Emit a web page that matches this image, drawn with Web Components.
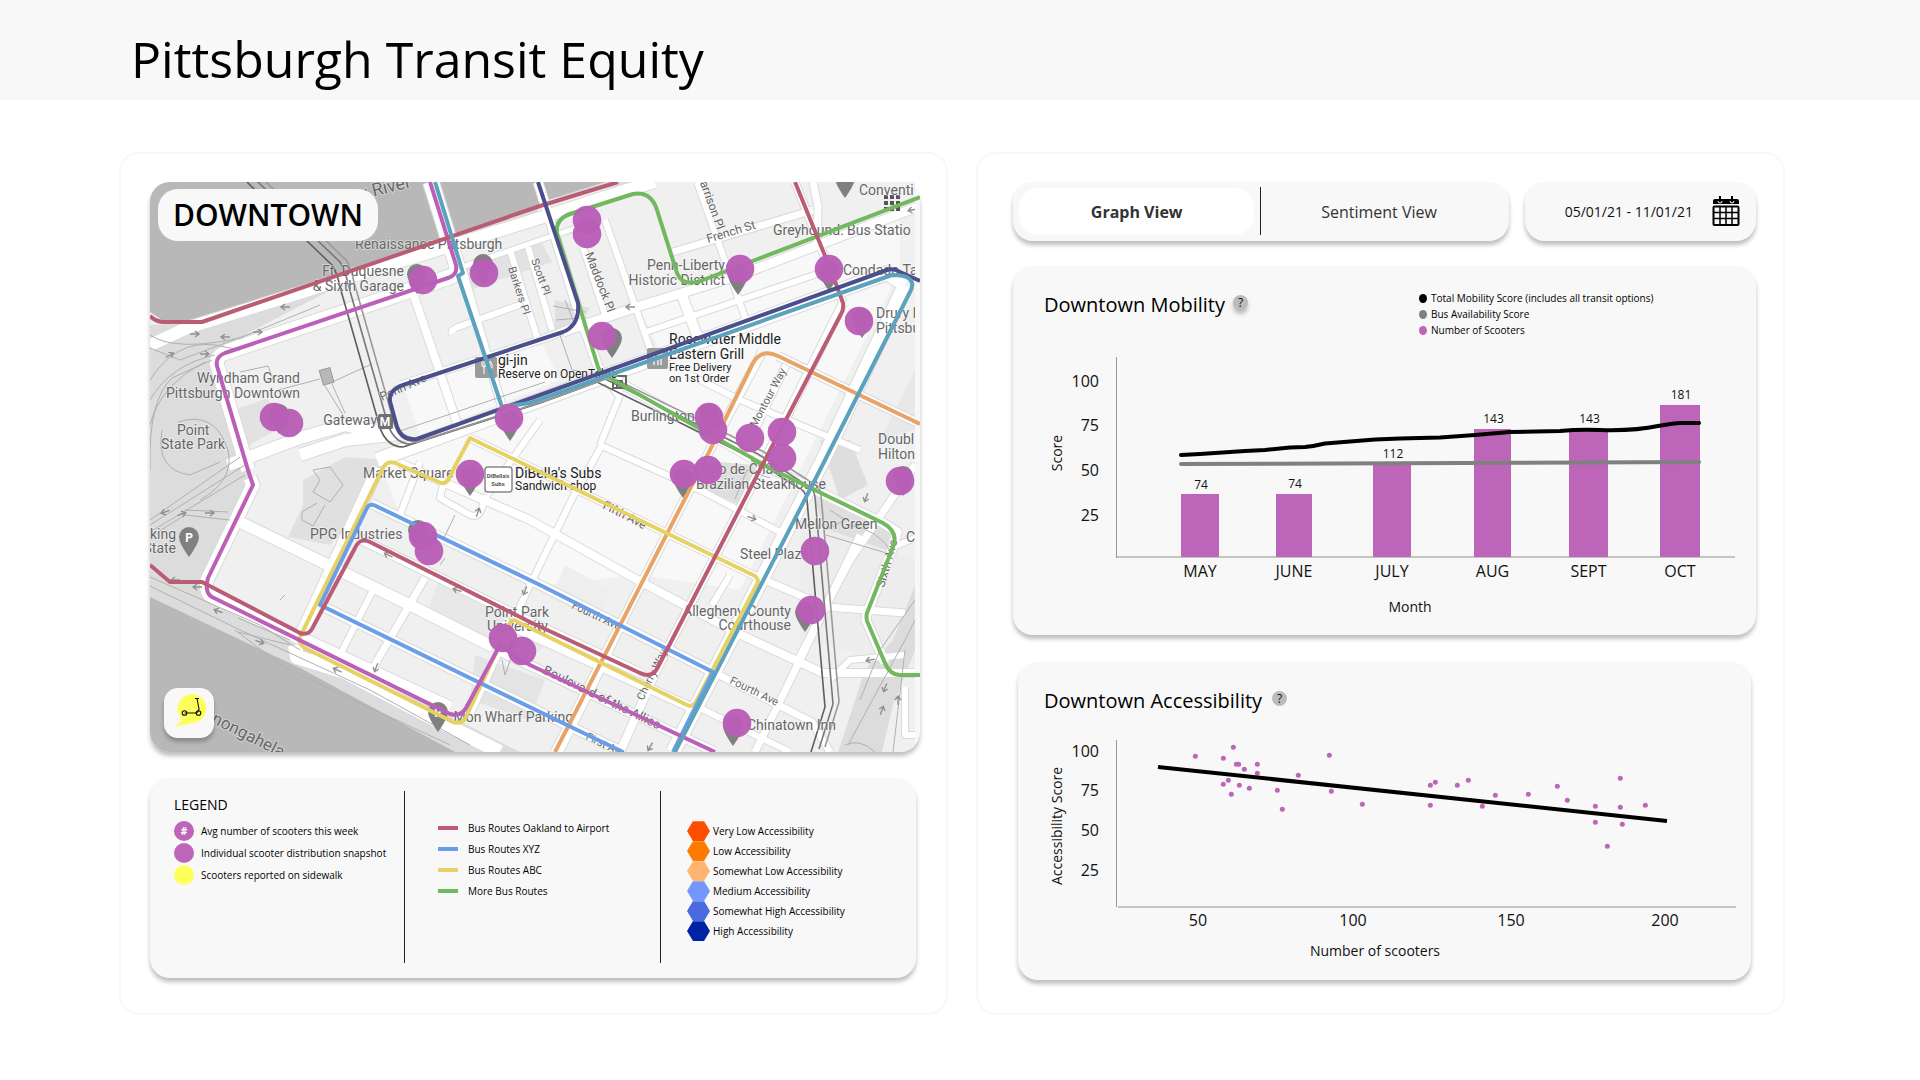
<!DOCTYPE html>
<html lang="en">
<head>
<meta charset="utf-8">
<title>Pittsburgh Transit Equity</title>
<style>
  html, body { margin: 0; background: #fff; }
  body { font-family: "Open Sans", "Noto Sans", sans-serif; color: #000; }
</style>
</head>
<body>
<transit-dashboard></transit-dashboard>

<script>
const define = (name, html) => {
  const template = document.createElement('template');
  template.innerHTML = html;
  customElements.define(name, class extends HTMLElement {
    constructor() {
      super();
      this.attachShadow({ mode: 'open' }).append(template.content.cloneNode(true));
    }
  });
};

/* ---------- page header ---------- */
define('page-header', `
<style>
  :host { display: block; background: #f8f8f8; }
  header { display: flex; align-items: center; height: 100px; padding: 18px 131px 0; box-sizing: border-box; }
  h1 { margin: 0; font-size: 50px; line-height: 64px; font-weight: 400; }
</style>
<header><h1><slot></slot></h1></header>`);

/* ---------- outlined panel ---------- */
define('outline-panel', `
<style>
  :host { display: block; box-sizing: border-box; border: 2px solid #f8f8f8; border-radius: 20px; }
</style>
<slot></slot>`);

/* ---------- help button ---------- */
define('help-button', `
<style>
  :host { display: inline-flex; }
  button { width: 15px; height: 15px; padding: 0; border: 0; border-radius: 50%; background: #bdbbbd; color: #111;
    font: 12px/15px "Open Sans", sans-serif; box-shadow: var(--help-shadow, none); cursor: pointer; }
</style>
<button type="button" aria-label="Help">?</button>`);

/* ---------- map ---------- */
const streets = [
  [12, 'M150 345L187 328L540 218L630 189L655 182'],
  [5, 'M225 347L448 272L540 240L600 220'],
  [14, 'M248 470L218 368Q214 357 225 353L448 278Q458 275 456 265L430 182'],
  [13, 'M250 478L253 485L207 580Q205 592 212 597L450 708'],
  [12, 'M228 465L300 438L345 425L380 432M300 455L345 440L400 434'],
  [8, 'M435 182L463 273L502 407'],
  [8, 'M413 293L457 423'], [6, 'M510 250L537 337'], [6, 'M528 247L552 330'],
  [6, 'M452 334Q450 330 458 327L522 304'],
  [9, 'M538 182L578 310L598 367L620 395'],
  [6, 'M583 247L605 315'], [6, 'M605 220L653 357'],
  [6, 'M697 182L747 323'], [10, 'M680 290L698 338'],
  [7, 'M673 252L813 210'], [7, 'M813 182L818 207L817 250'], [7, 'M795 182L843 303'],
  [9, 'M563 332L640 306L740 275L920 206'],
  [6, 'M643 333L740 300L829 270'],
  [14, 'M377 460L540 400L887 273L905 285'],
  [7, 'M400 385L540 340L580 325'],
  [14, 'M905 285L823 460L673 752'],
  [8, 'M843 303L765 460L658 667L620 752'],
  [8, 'M778 356L920 424M762 352L710 450L555 752'],
  [7, 'M786 365L745 450'],
  [6, 'M690 375L740 400L860 450'],
  [9, 'M603 373L768 467L883 523L897 532L893 547L867 613L866 620L885 663'],
  [12, 'M378 468L300 637'], [7, 'M470 438L753 575L827 607L905 613'],
  [11, 'M240 522L410 605L493 647'],
  [9, 'M372 504L540 585L713 672'],
  [9, 'M320 605L540 712L623 752'],
  [9, 'M360 539L530 622L640 673'],
  [9, 'M503 622L690 707'],
  [9, 'M497 650L715 752'],
  [7, 'M425 578L370 673'], [6, 'M373 590L340 655'],
  [8, 'M400 463L445 483L530 520L643 583L737 633L823 673H920'],
  [6, 'M573 497L530 585L470 715'], [6, 'M420 462L400 515'],
  [6, 'M443 485L440 498L470 515Q478 518 481 510L487 495'],
  [6, 'M640 585L600 672L560 752'], [6, 'M730 575L712 605'],
  [6, 'M540 420L487 495'], [6, 'M602 445L573 497'],
  [6, 'M600 445L700 490L780 532'], [6, 'M620 395L600 445'],
  [7, 'M860 535L800 660L755 752'], [7, 'M915 465L850 560L798 660'],
  [7, 'M713 672L812 722L830 752'], [6, 'M700 708L790 752'],
  [6, 'M905 655L850 660L830 680'], [6, 'M905 687V735H915'], [6, 'M893 547L915 538'],
  [14, 'M295 645L297 657L345 672L440 722L500 752']
];
const blocks = [
  ['#e2e2e2', '455,270 540,240 552,262 470,290'],
  ['#f0f0f0', '228,362 375,312 398,390 340,440 250,470'],
  ['#f0f0f0', '625,205 690,183 800,182 812,206 685,250 668,250'],
  ['#f0f0f0', '250,525 360,575 312,628 215,585'],
  ['#e0e0e0', '303,480 345,457 388,460 365,505 330,545 288,537 303,505'],
  ['#e2e2e2', '228,412 268,398 276,430 240,450'],
  ['#e8e8e8', '440,575 560,635 520,665 425,620'],
  ['#dedede', '700,460 763,466 743,507 693,483'],
  ['#dedede', '813,495 890,533 885,563 827,537'],
  ['#dedede', '820,440 850,440 868,485 840,500'],
  ['#ededed', '800,520 915,560 915,665 800,640'],
  ['#eeeeee', '565,565 610,590 600,620 550,600'],
  ['#e8e8e8', '880,440 915,370 915,430'],
  ['#dcdcdc', '915,585 893,640 865,670 838,752 882,752 893,705 915,650'],
  ['#e4e4e4', '475,655 545,680 530,720 470,700'],
  ['#e0e0e0', '555,300 590,308 580,325 555,330']
];
const rail = 'L307 241L332 265Q337 272 340 287L377 417Q383 447 403 447L540 403L597 382L750 457L797 487Q806 490 807 500L825 707L811 752';
const thinLines = [
  'M150 380Q175 340 215 345L240 350', 'M150 400Q170 365 215 355', 'M150 425Q160 385 205 362', 'M150 335Q175 352 240 338L320 305',
  'M150 470Q148 400 172 378L212 360', 'M178 422Q215 410 228 450Q235 480 200 500', 'M162 430Q155 470 190 475L220 462',
  'M150 525L245 465', 'M150 532L245 475', 'M150 520L240 457', 'M150 537L185 515L230 520', 'M185 510L228 512',
  'M150 577L260 625L300 650', 'M150 586L240 630L370 690L470 745', 'M238 618L290 640', 'M235 630L285 668L450 745', 'M238 632L290 645',
  'M150 348L180 360L260 330', 'M313 470L330 467L343 485L330 502L313 492L320 480L313 470', 'M317 503L302 512V520L313 526L325 505',
  'M455 515L443 540', 'M332 382L372 364', 'M278 390L320 379M240 372L268 366L274 382', 'M325 386L343 415M332 384L345 413',
  'M553 306L585 312M556 320L580 318M560 335L572 370L585 372M565 300L575 325',
  'M502 660L505 675L512 655M440 565L445 558', 'M826 535L893 555Q880 530 850 525M830 510L845 520L825 530',
  'M735 499L747 470L770 478', 'M860 700L880 650L915 600M848 745L905 640L915 620M893 752L905 650',
  'M845 745Q860 738 875 752', 'M400 431L545 382', 'M280 600L285 595'
];
const arrows = [[285,307,180],[195,334,0],[225,337,180],[258,332,0],[170,355,-30],[205,354,0],[165,512,160],[182,514,-20],[210,513,0],
  [175,580,180],[197,587,180],[218,611,200],[260,642,20],[337,670,205],[376,668,110],[525,591,110],[457,590,200],[388,555,205],
  [752,518,20],[866,498,110],[870,660,170],[885,688,110],[882,710,-70],[898,700,-90],[650,747,120],[630,307,180],[478,512,-70],[912,210,170]];
const pins = [[417,274],[483,264],[279,414],[510,421],[612,338],[738,275],[829,271],[862,318],[709,413],[903,476],[805,612],[733,726],[418,530],[470,476],[683,478],[189,537],[438,712],[845,178]];
const scooters = [[423,280],[484,273],[274,417],[289,423],[509,418],[587,220],[587,234],[740,269],[829,269],[859,321],[602,336],
  [709,417],[713,430],[750,438],[782,432],[782,458],[470,474],[423,536],[429,551],[503,638],[522,651],
  [684,474],[708,470],[900,481],[815,551],[811,610],[737,723]];
const routes = [
  ['#e8a468', 'M920 424L778 356Q762 348 753 363L710 450L555 752'],
  ['#e6d264', 'M470 438L453 470Q448 485 441 483L395 463Q387 460 383 468L300 637Q297 643 305 648L453 722Q462 725 466 717L510 623Q512 618 518 622L687 705Q693 708 697 700L758 582Q758 577 753 575Z'],
  ['#6a9ee8', 'M623 752L540 712L320 605L367 508Q370 502 378 507L540 585L713 672L673 752'],
  ['#72b85e', 'M920 197L703 280Q683 288 677 273L657 210Q651 191 633 194L573 213Q555 218 557 233L598 367Q600 373 606 376L768 467L753 460L883 523Q899 532 893 547L867 613Q866 617 867 621L885 663Q890 675 900 675H920'],
  ['#bb5fb8', 'M430 182L456 265Q458 275 448 278L225 353Q215 357 217 366L248 470L253 485L208 578Q204 592 212 597L450 714Q461 717 466 708L500 645L520 660L530 665L715 752'],
  ['#bb5c75', 'M150 316Q156 322 164 322H202L540 206L618 182M795 182L832 273L843 303Q844 309 841 314L765 460L658 667Q652 679 640 673L530 622L370 542Q360 537 355 548L313 627Q309 636 300 633L202 582H170L150 565'],
  ['#4b508c', 'M538 182L578 303Q580 325 563 332L403 385Q386 391 391 405L397 427Q402 441 417 439L540 395L887 270Q893 268 900 272L920 281'],
  ['#5ca2bd', 'M435 182L463 273L458 276L502 407L530 403L892 275Q917 275 911 290L820 470L675 752']
];
/* [text, x, y, options] */
const labels = [
  ['Renaissance Pittsburgh',355,249],['Ft. Duquesne',404,276,{e:1}],['&amp; Sixth Garage',404,291,{e:1}],
  ['y River',412,187,{e:1,r:-14,s:18}],
  ['Barkers Pl',508,268,{r:72,s:11}],['Scott Pl',531,260,{r:70,s:11}],['Maddock Pl',585,254,{r:69,s:12}],['Garrison Pl',697,175,{r:70,s:12}],
  ['French St',708,243,{r:-17,s:12}],['Penn-Liberty',725,270,{e:1}],['Historic District',725,285,{e:1}],
  ['Conventi',859,195],['Greyhound: Bus Statio',773,235],['Condado Ta',843,275],['Drury I',876,318],['Pittsbu',876,333],
  ['gi-jin',498,365,{c:'#222'}],['Reserve on OpenTable',498,378,{c:'#222',s:12}],
  ['Rosewater Middle',669,344,{c:'#222'}],['Eastern Grill',669,359,{c:'#222'}],['Free Delivery',669,371,{c:'#222',s:11}],['on 1st Order',669,382,{c:'#222',s:11}],
  ['Wyndham Grand',300,383,{e:1}],['Pittsburgh Downtown',300,398,{e:1}],['Gateway',377,425,{e:1}],['Penn Ave',382,401,{r:-24,s:12}],
  ['Point',177,435],['State Park',161,449],['Market Square',363,478],
  ["DiBella's Subs",515,478,{c:'#222'}],['Sandwich shop',515,490,{c:'#222',s:12}],
  ['PPG Industries',310,539],['king',176,539,{e:1}],['State',176,553,{e:1}],
  ['Point Park',485,617],['University',487,631],['Boulevard of the Allies',542,673,{r:26,s:13}],
  ['Fifth Ave',602,508,{r:27,s:12}],['Fourth Ave',571,608,{r:25,s:11}],['Fourth Ave',729,683,{r:26,s:11}],['First Ave',585,739,{r:26,s:11}],
  ['Cherry Way',643,701,{r:-64,s:11}],['Montour Way',756,428,{r:-62,s:11}],['Sixth Ave',884,588,{r:-74,s:12}],
  ['Burlington',631,421],['Doubl',878,444],['Hilton',878,459],['Fogo de Chão',695,474],['Brazilian Steakhouse',696,489],
  ['Mellon Green',795,529],['C',906,542],['Steel Plaza',740,559],['Allegheny County',791,616,{e:1}],['Courthouse',791,630,{e:1}],
  ['Chinatown Inn',747,730],['Mon Wharf Parking',573,722,{e:1}],['Monongahela',189,711,{r:27,s:17}]
];
const text = ([t, x, y, o = {}]) => `<text x="${x}" y="${y}" font-size="${o.s || 14}" fill="${o.c || '#666'}"` +
  (o.e ? ' text-anchor="end"' : '') + (o.r ? ` transform="rotate(${o.r} ${x} ${y})"` : '') + `>${t}</text>`;

define('transit-map', `
<style>
  :host { display: block; position: relative; border-radius: 20px; box-shadow: 0 4px 4px rgba(0,0,0,.25); background: #f8f8f8; }
  .map { display: block; width: 100%; height: auto; border-radius: 20px 0 20px 20px; }
  text { font-family: Roboto, sans-serif; }
  h2 { position: absolute; left: 8px; top: 7px; margin: 0; padding: 6px 15px; border-radius: 20px; background: #f8f8f8;
    font-size: 30px; line-height: 40px; font-weight: 600; }
  button { position: absolute; left: 14px; bottom: 14px; width: 50px; height: 50px; padding: 0; border: 0; border-radius: 14px;
    background: #f8f8f8; box-shadow: 0 4px 4px rgba(0,0,0,.25); cursor: pointer; }
  button svg { display: block; }
</style>
<svg class="map" viewBox="150 182 770 570" role="img" aria-label="Map of Downtown Pittsburgh">
  <defs><clipPath id="tile"><path d="M150 182H915V752H150Z"/></clipPath></defs>
  <g clip-path="url(#tile)">
    <path fill="#f0f0f0" d="M150 182H920V752H150Z"/>
    <path fill="#dcdcdc" d="M150 325L203 322L545 200L640 182H538V214L350 280L225 345L215 365L252 480L205 580L210 600L300 640L520 752H450L150 597Z"/>
    <path fill="#b8b8b8" d="M150 182H545V205L203 322H165L150 312ZM545 182H605L545 201ZM150 597L300 668L455 752H150Z"/>
    <path fill="#f8f8f8" d="M380 462L540 402L760 325L895 280L740 590L640 575L540 585L400 515ZM405 390L540 340L560 380L420 435ZM640 310L900 215V270L660 350Z"/>
    ${blocks.map(([c, p]) => `<polygon fill="${c}" points="${p}"/>`).join('')}
    <g fill="none" stroke="#dadada" stroke-linejoin="round">${streets.map(([w, d]) => `<path stroke-width="${w + 2}" d="${d}"/>`).join('')}</g>
    <g fill="none" stroke="#fff" stroke-linejoin="round">${streets.map(([w, d]) => `<path stroke-width="${w}" d="${d}"/>`).join('')}</g>
    <g fill="none" stroke="#b0b0b0">${thinLines.map(d => `<path d="${d}"/>`).join('')}</g>
    <g fill="none" stroke-width="1.6">
      <path stroke="#5e5e5e" d="M247 182${rail}"/>
      <path stroke="#777" d="M247 182${rail}" transform="translate(8 -3)"/>
      <path stroke="#999" d="M247 182${rail}" transform="translate(14 -5)"/>
    </g>
    <g fill="none" stroke="#909090" stroke-width="1.4">${arrows.map(([x, y, r]) => `<path transform="translate(${x} ${y}) rotate(${r})" d="M-5 0H3M0 -3L4 0L0 3"/>`).join('')}</g>
    <rect x="321" y="369" width="11" height="15" fill="#b8b8b8" stroke="#999" transform="rotate(-16 326 376)"/>
    <rect x="475" y="357" width="22" height="21" rx="2" fill="#9a9a9a"/>
    <path d="M482 361v4q0 2 2 2t2-2v-4M484 361v13M490 374v-13q3 3 2 7h-2" stroke="#fff" fill="none"/>
    <rect x="647" y="348" width="21" height="21" rx="2" fill="#9a9a9a"/>
    <path d="M652 354h11M654 354v11M658 354v11M661 354v11" stroke="#eee" stroke-width="1.5"/>
    <rect x="613" y="376" width="13" height="12" fill="none" stroke="#666" stroke-width="2"/><path d="M617 388v-7h5v7" stroke="#666" fill="none" stroke-width="2"/>
    <rect x="378" y="414" width="15" height="15" rx="2" fill="#707070"/>
    <rect x="485" y="467" width="27" height="25" rx="3" fill="#fff" stroke="#888" stroke-width="1.5"/>
    <g fill="#808080">${pins.map(([x, y]) => `<path d="M${x} ${y - 10}a10 10 0 0 1 10 10q0 6-10 20q-10-14-10-20a10 10 0 0 1 10-10z"/>`).join('')}
      <path d="M884 195h4v4h-4zm6 0h4v4h-4zm6 0h4v4h-4zm-12 6h4v4h-4zm6 0h4v4h-4zm6 0h4v4h-4zm-12 6h4v4h-4zm6 0h4v4h-4zm6 0h4v4h-4z" fill="#555"/></g>
    <g stroke="#fff" stroke-opacity=".5" stroke-width="1.5" paint-order="stroke">${labels.map(text).join('')}</g>
    <g font-weight="700" fill="#fff" text-anchor="middle">
      <text x="385" y="426" font-size="12">M</text><text x="189" y="542" font-size="12">P</text><text x="438" y="717" font-size="12">P</text>
    </g>
    <g font-weight="700" font-size="6" fill="#555" text-anchor="middle"><text x="498" y="478">DiBella's</text><text x="498" y="486">Subs</text></g>
  </g>
  <g fill="none" stroke-width="4" stroke-linejoin="round">${routes.map(([c, d]) => `<path stroke="${c}" d="${d}"/>`).join('')}</g>
  <g fill="#b95eb6" fill-opacity=".97">${scooters.map(([x, y]) => `<circle cx="${x}" cy="${y}" r="14.3"/>`).join('')}</g>
</svg>
<h2>DOWNTOWN</h2>
<button type="button" aria-label="Scooters reported on sidewalk">
  <svg width="50" height="50" viewBox="0 0 50 50">
    <path fill="#ffff5c" d="M28.500 6a14.500 14.500 0 0 1 3 28.500Q20 37 9.500 39Q16 35 18 31A14.500 14.500 0 0 1 28.500 6z"/>
    <g fill="none" stroke="#111" stroke-width="1.100"><circle cx="20.500" cy="25" r="2.300"/><circle cx="34.500" cy="25" r="2.300"/><path d="M20.500 25H31Q34 25 35 21L33 10.500M31 10.500H35"/></g>
  </svg>
</button>`);

/* ---------- map legend ---------- */
const hexagons = [['#ff4d00','Very Low Accessibility'],['#ff7a00','Low Accessibility'],['#ffb570','Somewhat Low Accessibility'],
  ['#7596ff','Medium Accessibility'],['#496ae0','Somewhat High Accessibility'],['#0022a5','High Accessibility']];
const lines = [['#bb5c75','Bus Routes Oakland to Airport'],['#6a9ee8','Bus Routes XYZ'],['#e6d264','Bus Routes ABC'],['#72b85e','More Bus Routes']];
define('map-legend', `
<style>
  :host { display: grid; grid-template-columns: 254fr 256fr 256fr; box-sizing: border-box; min-height: 200px; padding: 13px 0 15px;
    border-radius: 20px; background: #f8f8f8; box-shadow: 0 4px 4px rgba(0,0,0,.25); }
  section + section { border-left: 1px solid #222; }
  .markers { padding: 4px 0 0 24px; }
  .routes { padding: 26px 0 0 33px; }
  .access { padding: 30px 0 0 26px; }
  h3 { margin: 0 0 5px; font-size: 14px; line-height: 20px; font-weight: 400; }
  ul { margin: 0; padding: 0; list-style: none; font-size: 10px; white-space: nowrap; }
  li { display: flex; align-items: center; }
  .markers li { height: 22px; gap: 7px; }
  .routes li { height: 21px; gap: 10px; }
  .access li { height: 20px; gap: 3px; }
  .dot { width: 20px; height: 20px; border-radius: 50%; background: #bd66b9; color: #fff; font-weight: 700; line-height: 20px; text-align: center; }
  .dot.sidewalk { background: #ffff5c; }
  .bar { width: 20px; height: 4px; }
  svg { display: block; }
</style>
<section class="markers">
  <h3>LEGEND</h3>
  <ul>
    <li><span class="dot">#</span>Avg number of scooters this week</li>
    <li><span class="dot"></span>Individual scooter distribution snapshot</li>
    <li><span class="dot sidewalk"></span>Scooters reported on sidewalk</li>
  </ul>
</section>
<section class="routes"><ul>${lines.map(([c, t]) => `<li><span class="bar" style="background:${c}"></span>${t}</li>`).join('')}</ul></section>
<section class="access"><ul>${hexagons.map(([c, t]) => `<li><svg width="23" height="20" viewBox="0 0 23 20"><path fill="${c}" d="M6 0H17L23 10L17 20H6L0 10Z"/><path stroke="#fff" stroke-opacity=".5" d="M6 0H17"/></svg>${t}</li>`).join('')}</ul></section>`);

/* ---------- view switch and date range ---------- */
define('view-tabs', `
<style>
  :host { display: flex; box-sizing: border-box; height: 59px; padding: 5px 12px 6px 6px; border-radius: 20px; background: #f8f8f8; box-shadow: 0 4px 4px rgba(0,0,0,.25); }
  button { flex: 1; margin: 1px 0 0; padding: 0; border: 0; border-radius: 20px; background: none; color: #333; font: 16px/22px "Open Sans", sans-serif; cursor: pointer; }
  button[aria-selected=true] { background: #fff; font-weight: 700; }
  hr { width: 1px; margin: 0 0 0 6px; border: 0; background: #222; }
</style>
<button type="button" role="tab" aria-selected="true">Graph View</button><hr><button type="button" role="tab" aria-selected="false">Sentiment View</button>`);

define('date-range', `
<style>
  :host { display: block; border-radius: 20px; background: #f8f8f8; box-shadow: 0 4px 4px rgba(0,0,0,.25); }
  button { display: flex; align-items: center; justify-content: flex-end; gap: 19px; box-sizing: border-box; width: 100%; height: 59px; padding: 0 16px 0 0;
    border: 0; background: none; color: #111; font: 14px/20px "Open Sans", sans-serif; cursor: pointer; }
  svg { margin-bottom: 2px; }
</style>
<button type="button"><span>05/01/21 - 11/01/21</span>
  <svg width="28" height="32" viewBox="0 0 28 32" fill="none">
    <path d="M1 9V6Q1 4 3 4H25Q27 4 27 6V9Z" fill="#000"/>
    <path d="M8 1V6M20 1V6" stroke="#000" stroke-width="2"/>
    <path d="M6 6Q6 8 8 8T10 6M18 6Q18 8 20 8T22 6" stroke="#fff"/>
    <rect x="1.500" y="11.500" width="25" height="18.500" rx="1" stroke="#000" stroke-width="2"/>
    <path d="M2 17.500H26M2 23.500H26M8 11V30M14 11V30M20 11V30" stroke="#000" stroke-width="1.500"/>
  </svg>
</button>`);

/* ---------- chart card ---------- */
define('chart-card', `
<style>
  :host { display: block; border-radius: 20px; background: #f8f8f8; box-shadow: 0 4px 4px rgba(0,0,0,.25); }
  header { display: grid; grid-template-columns: 375fr 337fr; align-items: start; box-sizing: border-box; height: var(--header, 80px); padding: 24px 0 0 var(--inset, 31px); }
  .title { display: flex; align-items: flex-start; gap: var(--help-gap, 8px); }
  h2 { margin: 0; font-size: 20px; line-height: 30px; font-weight: 400; }
  help-button { margin-top: 5px; }
</style>
<header><div class="title"><h2><slot name="title"></slot></h2><help-button></help-button></div><slot name="key"></slot></header>
<slot></slot>`);

const chartStyle = `
  :host { display: block; }
  svg { display: block; width: 100%; height: auto; }
  text { font-family: "Open Sans", sans-serif; font-size: 16px; fill: #111; text-anchor: middle; }
  .tick { text-anchor: end; }
  .name { font-size: 14px; }
  .value { font-size: 12px; }`;

define('mobility-key', `
<style>
  ul { margin: 0; padding: 0; list-style: none; font-size: 10px; line-height: 16px; white-space: nowrap; }
  li { display: flex; align-items: center; gap: 4px; }
  i { width: 8px; height: 9px; border-radius: 50%; }
</style>
<ul>
  <li><i style="background:#000"></i>Total Mobility Score (includes all transit options)</li>
  <li><i style="background:#808080"></i>Bus Availability Score</li>
  <li><i style="background:#bd66b9"></i>Number of Scooters</li>
</ul>`);

/* month, value, bar left, bar width, bar top, value baseline */
const months = [['MAY',74,1181,38,494,489],['JUNE',74,1276,36,494,488],['JULY',112,1373,38,465,458],['AUG',143,1474,37,429,423],['SEPT',143,1569,39,431,423],['OCT',181,1660,40,405,399]];
define('mobility-chart', `
<style>${chartStyle}</style>
<svg viewBox="1013 346 743 289" role="img" aria-label="Downtown mobility by month">
  <path d="M1117 557H1735" stroke="#c4c4c4" stroke-width="2"/>
  <path d="M1116.500 357V558" stroke="#999"/>
  ${[[100,387],[75,431],[50,476],[25,521]].map(([t, y]) => `<text class="tick" x="1099" y="${y}">${t}</text>`).join('')}
  <text class="name" transform="translate(1062 453) rotate(-90)">Score</text>
  ${months.map(([m, v, x, w, top, base]) => `<rect x="${x}" y="${top}" width="${w}" height="${557 - top}" fill="#bd66b9"/>
    <text x="${x + w / 2}" y="577">${m}</text><text class="value" x="${x + w / 2 + 1}" y="${base}">${v}</text>`).join('')}
  <text class="name" x="1410" y="612">Month</text>
  <g fill="none" stroke-width="4" stroke-linecap="round" stroke-linejoin="round">
    <path stroke="#808080" d="M1181 464L1699 462"/>
    <path stroke="#000" d="M1181 455L1200 454L1245 451L1265 450L1290 447.500L1305 447Q1315 446 1325 443.500L1350 441.500L1375 439.500L1400 438.500L1440 437.500L1475 435L1510 432L1560 431Q1580 429 1600 430Q1635 431 1658 426Q1675 423 1680 423H1699"/>
  </g>
</svg>`);

const samples = [[586,319],[700,292],[670,325],[709,343],[716,343],[733,358],[772,343],[772,370],[685,391],[670,403],[718,406],[748,415],[694,433],[832,421],[847,478],[895,376],[988,316],[994,424],[1087,463]]
  .map(([x, y]) => [1000 + x / 3, 650 + y / 3])
  .concat([[151,406],[166,397],[232,406],[265,391],[151,466],[307,469],[346,436],[445,433],[532,409],[562,451],[646,469],[646,517],[721,385],[721,472],[727,523],[796,466],[682,589]]
  .map(([x, y]) => [1380 + x / 3, 650 + y / 3]));
define('accessibility-chart', `
<style>${chartStyle}</style>
<svg viewBox="1018 730 733 250" role="img" aria-label="Accessibility score by number of scooters">
  <path d="M1118 907H1736" stroke="#c4c4c4" stroke-width="2"/>
  <path d="M1116.500 740V907" stroke="#999"/>
  ${[[100,757],[75,796],[50,836],[25,876]].map(([t, y]) => `<text class="tick" x="1099" y="${y}">${t}</text>`).join('')}
  ${[[50,1198],[100,1353],[150,1511],[200,1665]].map(([t, x]) => `<text x="${x}" y="926">${t}</text>`).join('')}
  <text class="name" transform="translate(1062 826) rotate(-90)">Accessibility Score</text>
  <text class="name" x="1375" y="956">Number of scooters</text>
  <g fill="#bd66b9">${samples.map(([x, y]) => `<circle cx="${x}" cy="${y}" r="2.500"/>`).join('')}</g>
  <path stroke="#000" stroke-width="4" d="M1158 767L1667 821"/>
</svg>`);

/* ---------- page ---------- */
define('transit-dashboard', `
<style>
  :host { display: block; }
  main { display: grid; grid-template-columns: 829fr 809fr; gap: 28px; padding: 52px 135px 65px 119px; }
  .left { padding: 28px 26px 35px 29px; }
  .right { padding: 28px 27px 33px 35px; }
  map-legend { margin: 26px 4px 0 0; }
  .controls { display: grid; grid-template-columns: 495fr 231fr; gap: 16px; }
  .mobility { margin-top: 25px; --help-shadow: 0 4px 4px rgba(0,0,0,.25); }
  .accessibility { margin: 27px 5px 0; --header: 68px; --inset: 26px; --help-gap: 10px; }
</style>
<page-header>Pittsburgh Transit Equity</page-header>
<main>
  <outline-panel class="left"><transit-map></transit-map><map-legend></map-legend></outline-panel>
  <outline-panel class="right">
    <div class="controls"><view-tabs role="tablist"></view-tabs><date-range></date-range></div>
    <chart-card class="mobility"><span slot="title">Downtown Mobility</span><mobility-key slot="key"></mobility-key><mobility-chart></mobility-chart></chart-card>
    <chart-card class="accessibility"><span slot="title">Downtown Accessibility</span><accessibility-chart></accessibility-chart></chart-card>
  </outline-panel>
</main>`);
</script>
</body>
</html>
